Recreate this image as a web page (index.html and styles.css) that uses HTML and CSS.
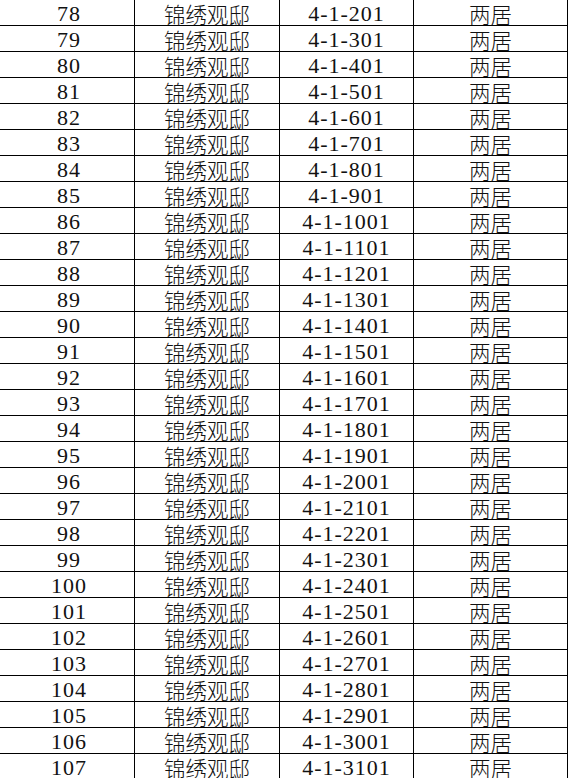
FILE: index.html
```html
<!DOCTYPE html>
<html lang="zh-CN">
<head>
<meta charset="utf-8">
<title>锦绣观邸</title>
<link rel="stylesheet" href="styles.css">
</head>
<body>
<table class="sheet">
<colgroup><col class="c-no"><col class="c-name"><col class="c-room"><col class="c-type"></colgroup>
<tbody>
<tr><td class="num">78</td><td class="cjk">锦绣观邸</td><td class="num">4-1-201</td><td class="cjk">两居</td></tr>
<tr><td class="num">79</td><td class="cjk">锦绣观邸</td><td class="num">4-1-301</td><td class="cjk">两居</td></tr>
<tr><td class="num">80</td><td class="cjk">锦绣观邸</td><td class="num">4-1-401</td><td class="cjk">两居</td></tr>
<tr><td class="num">81</td><td class="cjk">锦绣观邸</td><td class="num">4-1-501</td><td class="cjk">两居</td></tr>
<tr><td class="num">82</td><td class="cjk">锦绣观邸</td><td class="num">4-1-601</td><td class="cjk">两居</td></tr>
<tr><td class="num">83</td><td class="cjk">锦绣观邸</td><td class="num">4-1-701</td><td class="cjk">两居</td></tr>
<tr><td class="num">84</td><td class="cjk">锦绣观邸</td><td class="num">4-1-801</td><td class="cjk">两居</td></tr>
<tr><td class="num">85</td><td class="cjk">锦绣观邸</td><td class="num">4-1-901</td><td class="cjk">两居</td></tr>
<tr><td class="num">86</td><td class="cjk">锦绣观邸</td><td class="num">4-1-1001</td><td class="cjk">两居</td></tr>
<tr><td class="num">87</td><td class="cjk">锦绣观邸</td><td class="num">4-1-1101</td><td class="cjk">两居</td></tr>
<tr><td class="num">88</td><td class="cjk">锦绣观邸</td><td class="num">4-1-1201</td><td class="cjk">两居</td></tr>
<tr><td class="num">89</td><td class="cjk">锦绣观邸</td><td class="num">4-1-1301</td><td class="cjk">两居</td></tr>
<tr><td class="num">90</td><td class="cjk">锦绣观邸</td><td class="num">4-1-1401</td><td class="cjk">两居</td></tr>
<tr><td class="num">91</td><td class="cjk">锦绣观邸</td><td class="num">4-1-1501</td><td class="cjk">两居</td></tr>
<tr><td class="num">92</td><td class="cjk">锦绣观邸</td><td class="num">4-1-1601</td><td class="cjk">两居</td></tr>
<tr><td class="num">93</td><td class="cjk">锦绣观邸</td><td class="num">4-1-1701</td><td class="cjk">两居</td></tr>
<tr><td class="num">94</td><td class="cjk">锦绣观邸</td><td class="num">4-1-1801</td><td class="cjk">两居</td></tr>
<tr><td class="num">95</td><td class="cjk">锦绣观邸</td><td class="num">4-1-1901</td><td class="cjk">两居</td></tr>
<tr><td class="num">96</td><td class="cjk">锦绣观邸</td><td class="num">4-1-2001</td><td class="cjk">两居</td></tr>
<tr><td class="num">97</td><td class="cjk">锦绣观邸</td><td class="num">4-1-2101</td><td class="cjk">两居</td></tr>
<tr><td class="num">98</td><td class="cjk">锦绣观邸</td><td class="num">4-1-2201</td><td class="cjk">两居</td></tr>
<tr><td class="num">99</td><td class="cjk">锦绣观邸</td><td class="num">4-1-2301</td><td class="cjk">两居</td></tr>
<tr><td class="num">100</td><td class="cjk">锦绣观邸</td><td class="num">4-1-2401</td><td class="cjk">两居</td></tr>
<tr><td class="num">101</td><td class="cjk">锦绣观邸</td><td class="num">4-1-2501</td><td class="cjk">两居</td></tr>
<tr><td class="num">102</td><td class="cjk">锦绣观邸</td><td class="num">4-1-2601</td><td class="cjk">两居</td></tr>
<tr><td class="num">103</td><td class="cjk">锦绣观邸</td><td class="num">4-1-2701</td><td class="cjk">两居</td></tr>
<tr><td class="num">104</td><td class="cjk">锦绣观邸</td><td class="num">4-1-2801</td><td class="cjk">两居</td></tr>
<tr><td class="num">105</td><td class="cjk">锦绣观邸</td><td class="num">4-1-2901</td><td class="cjk">两居</td></tr>
<tr><td class="num">106</td><td class="cjk">锦绣观邸</td><td class="num">4-1-3001</td><td class="cjk">两居</td></tr>
<tr><td class="num">107</td><td class="cjk">锦绣观邸</td><td class="num">4-1-3101</td><td class="cjk">两居</td></tr>
</tbody>
</table>
</body>
</html>
```

FILE: styles.css
```css
html, body {
  margin: 0;
  padding: 0;
  background: #ffffff;
}

.sheet {
  border-collapse: separate;
  border-spacing: 0;
  table-layout: fixed;
  width: 568px;
  color: #111111;
}

.c-no { width: 135px; }
.c-name { width: 145px; }
.c-room { width: 134px; }
.c-type { width: 154px; }

.sheet td {
  box-sizing: border-box;
  height: 26px;
  padding: 3px 0 0 0;
  border-right: 1px solid #000000;
  border-bottom: 1px solid #000000;
  text-align: center;
  vertical-align: middle;
  white-space: nowrap;
  line-height: 22px;
}

.sheet td:first-child {
  padding-left: 4px;
}

.num {
  font-family: "Liberation Serif", "Noto Sans CJK SC", serif;
  font-size: 22px;
  letter-spacing: 1px;
}

.cjk {
  font-family: "Noto Sans CJK SC", sans-serif;
  font-size: 21.5px;
  font-weight: 300;
  line-height: 21px;
}
```
